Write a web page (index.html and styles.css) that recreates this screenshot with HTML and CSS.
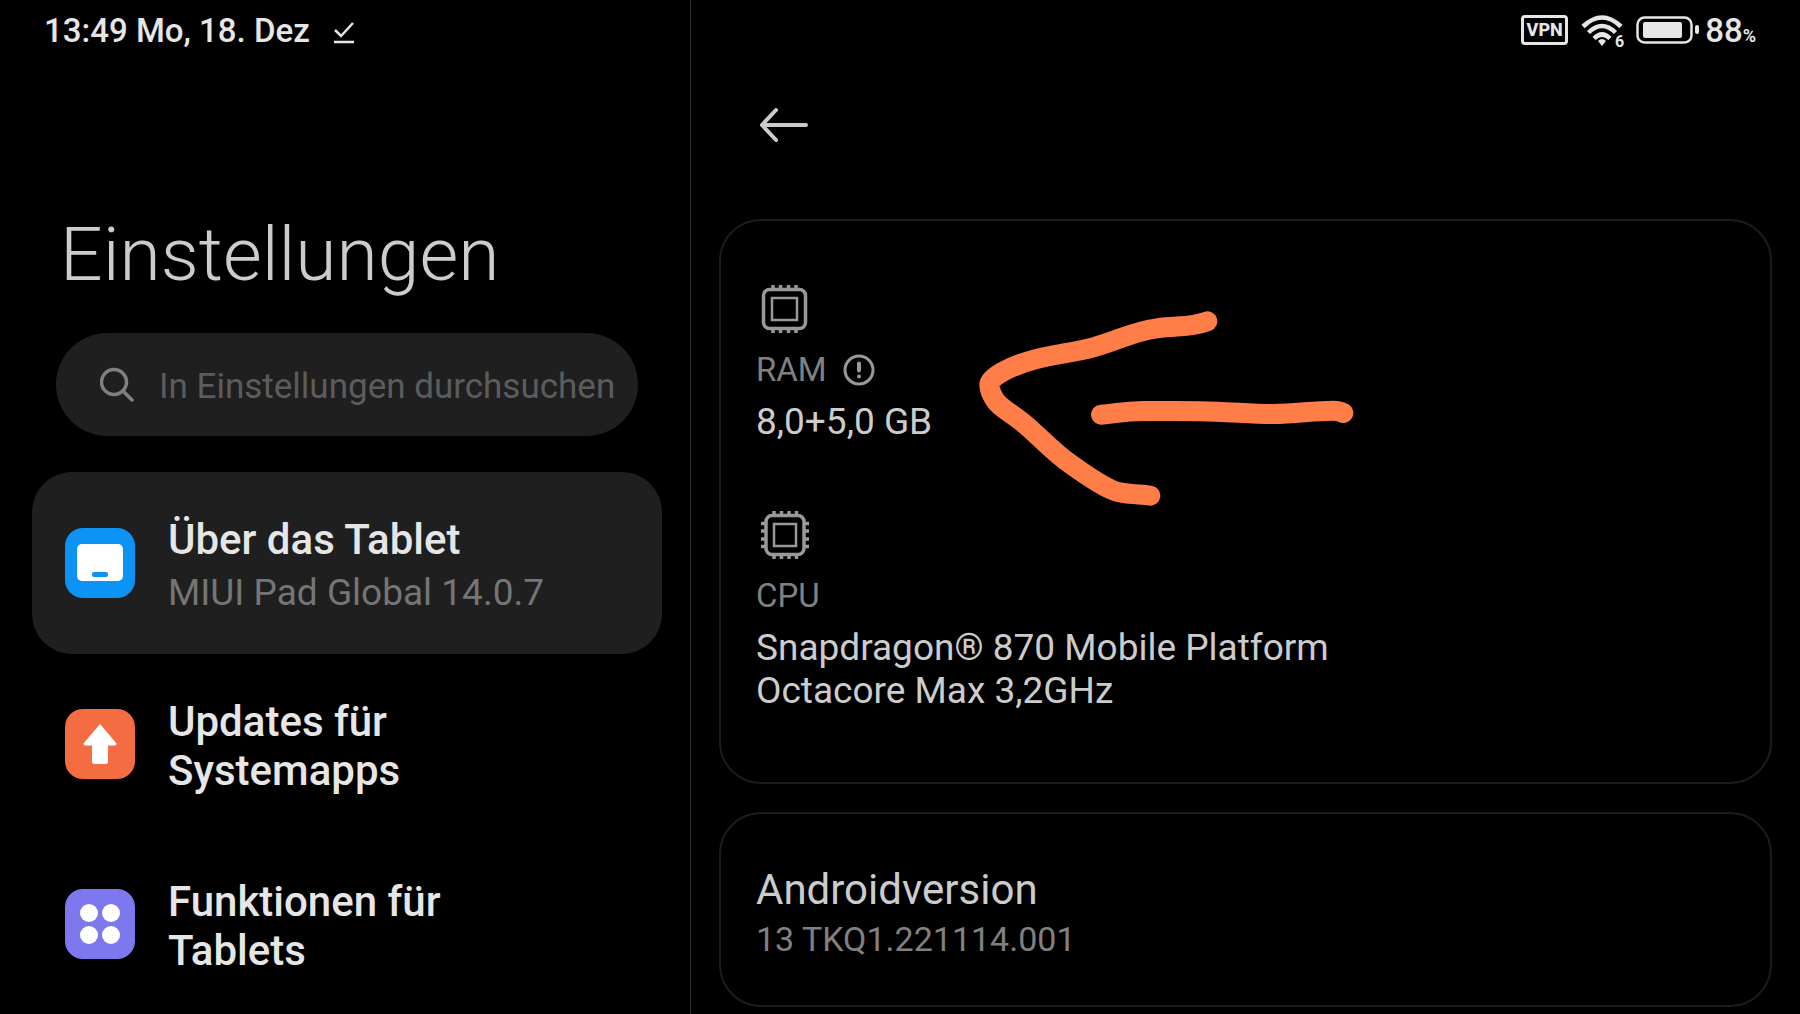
FILE: index.html
```html
<!DOCTYPE html>
<html lang="de">
<head>
<meta charset="utf-8">
<meta name="viewport" content="width=device-width, initial-scale=1">
<title>Einstellungen</title>
<link rel="stylesheet" href="styles.css">
</head>
<body>
<div class="layout">
  <div class="sidebar">
    <div class="status">
      <span>13:49 Mo, 18. Dez</span>
      <svg class="status-check" width="20" height="22" viewBox="0 0 20 22" fill="none" stroke="currentColor" stroke-width="2.500" aria-hidden="true"><path d="M1 8l6 6L19 1M0 20h20"/></svg>
    </div>
    <h1 class="title">Einstellungen</h1>
    <label class="search">
      <svg width="34" height="36" viewBox="0 0 34 36" fill="none" stroke="currentColor" stroke-width="3.500" stroke-linecap="round" aria-hidden="true"><circle cx="14" cy="15" r="12.500"/><path d="M23 24l9 9"/></svg>
      <input class="search-input" type="text" placeholder="In Einstellungen durchsuchen" aria-label="In Einstellungen durchsuchen">
    </label>
    <nav class="menu">
      <a class="item item-active" href="#tablet">
        <svg class="item-icon" viewBox="0 0 70 70" aria-hidden="true"><rect width="70" height="70" rx="18" fill="#0d93f5"/><rect x="12" y="16" width="46" height="37" rx="5" fill="#fff"/><rect x="27" y="44" width="16" height="5" rx="2" fill="#0d93f5"/></svg>
        <span class="item-text"><span class="item-title">Über das Tablet</span><span class="item-sub">MIUI Pad Global 14.0.7</span></span>
      </a>
      <a class="item" href="#updates">
        <svg class="item-icon" viewBox="0 0 70 70" aria-hidden="true"><rect width="70" height="70" rx="18" fill="#f36c42"/><path d="M35 15.500L51 34.500q.5 1.500-1 1.500H42.500v17q0 1.500-1.500 1.500h-12Q27.500 54.500 27.500 53V36h-7.500q-1.500 0-1-1.500z" fill="#fff" stroke="#fff" stroke-linejoin="round"/></svg>
        <span class="item-text"><span class="item-title">Updates für<br>Systemapps</span></span>
      </a>
      <a class="item" href="#funktionen">
        <svg class="item-icon" viewBox="0 0 70 70" aria-hidden="true"><rect width="70" height="70" rx="18" fill="#7d78ee"/><g fill="#fff"><circle cx="24" cy="24" r="9"/><circle cx="46" cy="24" r="9"/><circle cx="24" cy="46" r="9"/><circle cx="46" cy="46" r="9"/></g></svg>
        <span class="item-text"><span class="item-title">Funktionen für<br>Tablets</span></span>
      </a>
    </nav>
  </div>
  <main class="detail">
    <div class="status status-right">
      <span class="vpn">VPN</span>
      <span class="wifi">
        <svg width="42" height="32" viewBox="0 0 42 32" aria-hidden="true"><g fill="none" stroke="currentColor" stroke-width="4.500"><path d="M2 11.500Q21-6.500 40 11.500"/><path d="M7.500 17.500Q21 4.500 34.500 17.500"/><path d="M13 23.500Q21 15.500 29 23.500"/></g><path d="M21 31l-4-5q4-4 8 0z" fill="currentColor"/></svg>
        <span class="wifi-gen">6</span>
      </span>
      <svg class="battery" width="64" height="28" viewBox="0 0 64 28" aria-hidden="true"><rect x="1.500" y="1.500" width="54" height="25" rx="7" fill="none" stroke="currentColor" stroke-width="2.500"/><rect x="7" y="6" width="39" height="16" rx="2" fill="currentColor"/><rect x="59" y="9" width="4" height="9" rx="2" fill="currentColor"/></svg>
      <span class="percent">88<small>%</small></span>
    </div>
    <button class="back" type="button" aria-label="Zurück">
      <svg width="50" height="36" viewBox="0 0 50 36" fill="none" stroke="currentColor" stroke-width="4" stroke-linecap="round" stroke-linejoin="round" aria-hidden="true"><path d="M17 3L3 18l14 15M3 18h44"/></svg>
    </button>
    <section class="card hardware">
      <div class="spec">
        <svg class="chip" width="54" height="50" viewBox="0 0 54 50" fill="none" stroke="currentColor" aria-hidden="true"><rect x="7.500" y="5.500" width="42" height="39" rx="6" stroke-width="3.500"/><rect x="16" y="14" width="25" height="22" stroke-width="2.500"/><path d="M17 5V1M24.500 5V1M32.500 5V1M40 5V1M17 45v4M24.500 45v4M32.500 45v4M40 45v4" stroke-width="3.500"/></svg>
        <div class="label">RAM
          <svg width="32" height="32" viewBox="0 0 32 32" fill="none" stroke="currentColor" aria-hidden="true"><circle cx="16" cy="16" r="14" stroke-width="3"/><path d="M16 9.500v7M16 22.500v.1" stroke-width="4" stroke-linecap="round"/></svg>
        </div>
        <div class="value">8,0+5,0 GB</div>
      </div>
      <div class="spec">
        <svg class="chip" width="54" height="50" viewBox="0 0 54 50" fill="none" stroke="currentColor" aria-hidden="true"><rect x="10" y="5.500" width="38" height="39" rx="6" stroke-width="3.500"/><rect x="18" y="14" width="22" height="22" stroke-width="2.500"/><path d="M18 5V1M25.500 5V1M33 5V1M40.500 5V1M18 45v4M25.500 45v4M33 45v4M40.500 45v4M9 13.500H5M9 21H5M9 29H5M9 36.500H5M49 13.500h4M49 21h4M49 29h4M49 36.500h4" stroke-width="3.500"/></svg>
        <div class="label">CPU</div>
        <div class="value">Snapdragon® 870 Mobile Platform<br>Octacore Max 3,2GHz</div>
      </div>
      <svg class="marker" viewBox="0 0 1260 690" fill="none" stroke="#ff7d47" stroke-width="60" stroke-linecap="round" stroke-linejoin="round" aria-hidden="true"><path d="M742 94C690 113 655 106 590 115C515 125 475 152 400 172C340 188 285 192 225 208C150 228 88 262 88 284C88 300 100 330 120 347C140 364 165 378 195 403C235 437 270 476 315 510C360 543 410 578 450 597C475 612 530 612 571 617"/><path d="M423 374C470 370 490 364 550 363C620 364 700 362 770 365C830 367 880 372 940 372C1010 371 1060 362 1120 362Q1138 362 1150 369"/></svg>
    </section>
    <section class="card version">
      <h2 class="version-title">Androidversion</h2>
      <div class="version-sub">13 TKQ1.221114.001</div>
    </section>
  </main>
</div>
</body>
</html>
```
FILE: styles.css
```css
* {
  box-sizing: border-box;
}

body {
  margin: 0;
  background: #000;
  color: #e6e6e6;
  font-family: Roboto, "Liberation Sans", sans-serif;
}

svg {
  display: block;
  flex: none;
}

.layout {
  display: grid;
  grid-template-columns: 69fr 111fr;
  min-height: 100vh;
}

.sidebar,
.detail {
  min-width: 0;
}

.detail {
  border-left: 1px solid #333;
}

/* Status bar */
.status {
  display: flex;
  align-items: center;
  gap: 24px;
  height: 51px;
  padding: 11px 44px 0;
  font-size: 33px;
  line-height: 40px;
  font-weight: 500;
}

.status-check {
  margin-top: 4px;
}

.status-right {
  justify-content: flex-end;
  gap: 13px;
}

.vpn {
  width: 47px;
  height: 30px;
  margin-bottom: 2px;
  border: 3px solid;
  border-radius: 4px;
  font-size: 18px;
  line-height: 24px;
  font-weight: 800;
  text-align: center;
}

.wifi {
  position: relative;
}

.wifi-gen {
  position: absolute;
  right: -1px;
  bottom: -1px;
  padding-left: 2px;
  background: #000;
  font-size: 16px;
  line-height: 13px;
  font-weight: 700;
}

.battery {
  margin-bottom: 2px;
}

.percent {
  margin-left: -8px;
}

.percent small {
  font-size: 18px;
  line-height: 18px;
  font-weight: 700;
}

/* Sidebar */
.title {
  margin: 158px 0 0 60px;
  color: #ccc;
  font-size: 75px;
  line-height: 90px;
  font-weight: 300;
}

.search {
  display: flex;
  align-items: center;
  gap: 25px;
  height: 103px;
  margin: 34px 52px 0 56px;
  padding: 0 16px 0 44px;
  border-radius: 52px;
  background: #1f1f1f;
  color: #808080;
}

.search-input {
  flex: 1;
  min-width: 0;
  padding: 4px 0 0;
  border: 0;
  outline: 0;
  background: none;
  color: #ccc;
  font: 400 35px/44px Roboto, "Liberation Sans", sans-serif;
}

.search-input::placeholder {
  color: #5c5c5c;
  opacity: 1;
}

.menu {
  margin: 36px 28px 0 32px;
}

.item {
  display: flex;
  align-items: center;
  gap: 33px;
  min-height: 180px;
  padding: 0 33px;
  border-radius: 40px;
  color: #e6e6e6;
  text-decoration: none;
}

.item-active {
  min-height: 182px;
  background: #1f1f1f;
}

.item-icon {
  width: 70px;
  height: 70px;
}

.item-text {
  display: grid;
  gap: 6px;
  padding-top: 4px;
}

.item-title {
  font-size: 42px;
  line-height: 49px;
  font-weight: 500;
}

.item-sub {
  color: #757575;
  font-size: 37px;
  line-height: 46px;
}

/* Detail pane */
.back {
  display: block;
  margin: 56px 0 76px 68px;
  padding: 0;
  border: 0;
  background: none;
  color: #ccc;
}

.card {
  position: relative;
  margin: 0 28px 28px;
  border: 2px solid #1c1c1c;
  border-radius: 42px;
}

.hardware {
  display: grid;
  gap: 67px;
  padding: 63px 35px 70px;
}

.chip {
  color: #999;
}

.label {
  display: flex;
  align-items: center;
  gap: 16px;
  margin: 16px 0 10px;
  color: #808080;
  font-size: 33px;
  line-height: 40px;
}

.label svg {
  color: #999;
}

.value {
  color: #ccc;
  font-size: 37px;
  line-height: 43px;
}

/* Hand-drawn arrow lying over the card */
.marker {
  position: absolute;
  top: 69px;
  left: 239px;
  width: 420px;
}

.version {
  margin-bottom: 0;
  padding: 51px 35px 46px;
}

.version-title {
  margin: 0 0 5px;
  color: #ccc;
  font-size: 42px;
  line-height: 49px;
  font-weight: 400;
}

.version-sub {
  color: #808080;
  font-size: 34px;
  line-height: 40px;
}
```
